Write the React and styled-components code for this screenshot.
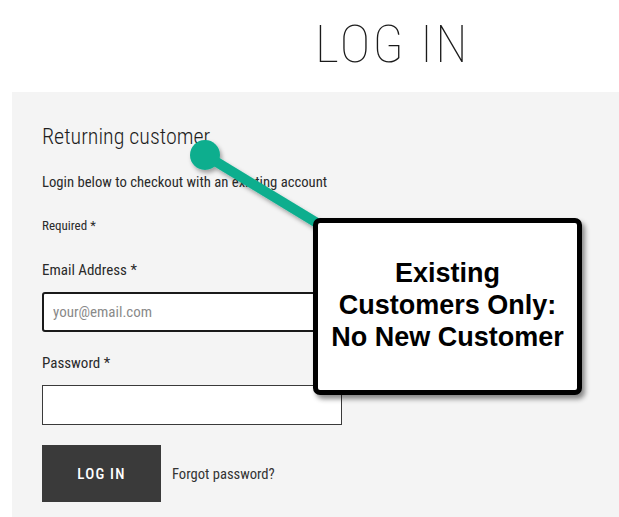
import styled, { createGlobalStyle } from "styled-components";

const GlobalStyle = createGlobalStyle`
  html, body {
    margin: 0;
    padding: 0;
    background: #fff;
    overflow: hidden;
  }
  body {
    font-family: Roboto, "Noto Sans", sans-serif;
    font-stretch: condensed;
    color: #222;
  }
`;

const Page = styled.div`
  position: relative;
  width: 619px;
  height: 517px;
  overflow: hidden;
`;

const Title = styled.h1`
  margin: 0;
  padding: 15px 0 0 166px;
  height: 92px;
  box-sizing: border-box;
  text-align: center;
  font-weight: 100;
  font-size: 52px;
  line-height: 60px;
  letter-spacing: 2.5px;
  color: #1a1a1a;
`;

const Panel = styled.section`
  margin-left: 12px;
  background: #f4f4f4;
  height: 425px;
  padding: 30px 30px 0;
  box-sizing: border-box;
`;

const Heading = styled.h2`
  margin: 0 0 20px;
  font-weight: 300;
  font-size: 22px;
  line-height: 30px;
  color: #1e1e1e;
`;

const Note = styled.p`
  margin: 0 0 ${(p) => p.$gap}px;
  font-size: ${(p) => p.$size}px;
  line-height: 20px;
  color: #2a2a2a;
`;

const Field = styled.div`
  display: flex;
  flex-direction: column;
  gap: 12px;
  width: 300px;
  margin-bottom: ${(p) => p.$after}px;
`;

const Label = styled.label`
  font-size: 15px;
  line-height: 20px;
  color: #2a2a2a;
`;

const Input = styled.input`
  box-sizing: border-box;
  width: 100%;
  height: 40px;
  padding: 0 9px;
  font-family: inherit;
  font-stretch: condensed;
  font-size: 15px;
  color: #222;
  background: #fff;
  border: ${(p) => (p.$focused ? "2px solid #1a1a1a" : "1px solid #3a3a3a")};
  border-radius: ${(p) => (p.$focused ? 3 : 0)}px;
  outline: none;
  &::placeholder {
    color: #8a8a8a;
  }
`;

const Actions = styled.div`
  display: flex;
  align-items: center;
  gap: 11px;
`;

const Button = styled.button`
  width: 119px;
  height: 57px;
  border: none;
  background: #3a3a3a;
  color: #fff;
  font-family: inherit;
  font-stretch: condensed;
  font-size: 15px;
  font-weight: 500;
  letter-spacing: 1.2px;
`;

const Link = styled.a`
  font-size: 14.6px;
  color: #333;
  text-decoration: none;
`;

const Pointer = styled.svg`
  position: absolute;
  left: 0;
  top: 0;
  pointer-events: none;
`;

const Callout = styled.div`
  position: absolute;
  left: 313px;
  top: 218px;
  width: 269px;
  height: 177px;
  box-sizing: border-box;
  border: 5px solid #000;
  border-radius: 7px;
  background: #fff;
  box-shadow: 3px 4px 5px rgba(0, 0, 0, 0.45);
  display: flex;
  align-items: center;
  justify-content: center;
  padding-bottom: 3px;
  text-align: center;
  font-family: "Liberation Sans", Arial, sans-serif;
  font-stretch: normal;
  font-weight: 700;
  font-size: 27px;
  line-height: 32px;
  color: #000;
`;

export default function App() {
  return (
    <Page>
      <GlobalStyle />
      <Title>LOG IN</Title>
      <Panel>
        <Heading>Returning customer</Heading>
        <Note $size={14.7} $gap={24}>Login below to checkout with an existing account</Note>
        <Note $size={13} $gap={24}>Required *</Note>
        <Field $after={21}>
          <Label>Email Address *</Label>
          <Input $focused placeholder="your@email.com" />
        </Field>
        <Field $after={20}>
          <Label>Password *</Label>
          <Input type="password" />
        </Field>
        <Actions>
          <Button>LOG IN</Button>
          <Link href="#">Forgot password?</Link>
        </Actions>
      </Panel>
      <Pointer width="619" height="517">
        <defs>
          <filter id="sh" x="-20%" y="-20%" width="140%" height="140%">
            <feDropShadow dx="2" dy="3" stdDeviation="2" floodColor="#000" floodOpacity="0.35" />
          </filter>
        </defs>
        <g filter="url(#sh)" fill="#0aae8e" stroke="#0aae8e">
          <line x1="205" y1="155" x2="322" y2="226" strokeWidth="10" />
          <circle cx="205" cy="155" r="15" stroke="none" />
        </g>
      </Pointer>
      <Callout>
        Existing<br />Customers Only:<br />No New Customer
      </Callout>
    </Page>
  );
}
